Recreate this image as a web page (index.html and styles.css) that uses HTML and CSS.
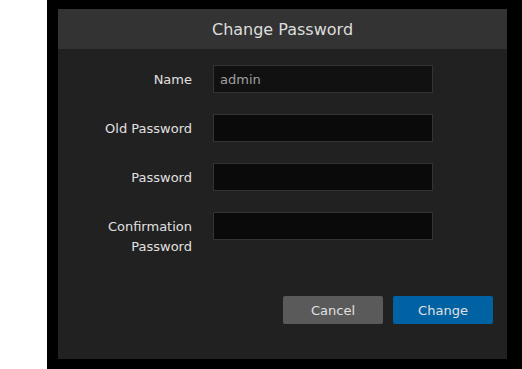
FILE: index.html
```html
<!DOCTYPE html>
<html lang="en">
<head>
  <meta charset="UTF-8" />
  <title>Change Password</title>
  <link rel="stylesheet" href="styles.css">
</head>
<body>
  <div class="backdrop">
    <div class="dialog">
      <div class="dialogHeader">Change Password</div>

      <form class="dialogBody">
        <div class="fields">
          <label for="name">Name</label>
          <input id="name" class="disabled" type="text" value="admin" readonly>

          <label for="oldPassword">Old Password</label>
          <input id="oldPassword" type="password">

          <label for="password">Password</label>
          <input id="password" type="password">

          <label for="confirm">Confirmation Password</label>
          <input id="confirm" type="password">
        </div>

        <div class="actions">
          <button type="button" class="cancel">Cancel</button>
          <button type="button" class="change">Change</button>
        </div>
      </form>
    </div>
  </div>
</body>
</html>
```

FILE: styles.css
```css
* {
  margin: 0;
  padding: 0;
  box-sizing: border-box;
  font-family: 'DejaVu Sans', Verdana, sans-serif;
}

body {
  background: #fff;
  height: 369px;
  overflow: hidden;
}

.backdrop {
  margin-left: 47px;
  height: 369px;
  background: #000;
  padding: 9px 15px 10px 11px;
}

.dialog {
  width: 449px;
  height: 350px;
  background: #212121;
  display: flex;
  flex-direction: column;
}

.dialogHeader {
  height: 40px;
  background: #333;
  color: #ddd;
  font-size: 16px;
  display: flex;
  align-items: center;
  justify-content: center;
}

.dialogBody {
  padding: 16px 14px 0 0;
}

.fields {
  display: grid;
  grid-template-columns: 134px 220px;
  column-gap: 21px;
  row-gap: 21px;
  align-items: start;
}

label {
  color: #e0e0e0;
  font-size: 13px;
  line-height: 20px;
  padding-top: 5px;
  text-align: right;
  padding-left: 40px;
}

input {
  height: 28px;
  background: #0a0a0a;
  border: 1px solid #333;
  color: #a0a0a0;
  font-size: 13px;
  padding: 0 6px;
  outline: none;
}

input.disabled {
  background: #111;
}

.actions {
  display: flex;
  justify-content: flex-end;
  gap: 10px;
  margin-top: 39px;
}

button {
  width: 100px;
  height: 28px;
  border: none;
  border-radius: 2px;
  color: #e0e0e0;
  font-size: 13px;
  cursor: pointer;
}

.cancel {
  background: #5a5a5a;
}

.change {
  background: #0062a3;
}
```
